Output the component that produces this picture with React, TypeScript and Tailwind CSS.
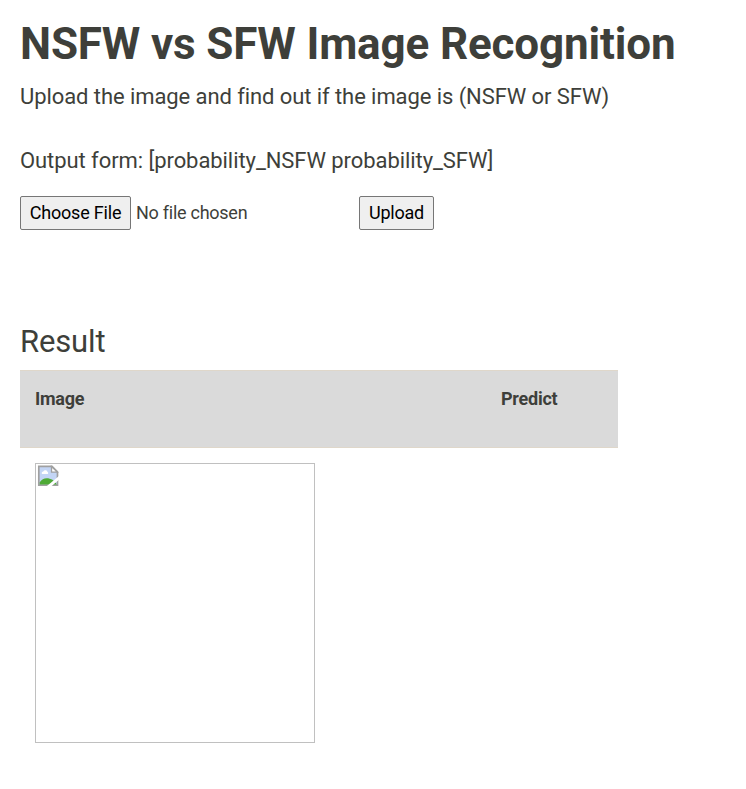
export default function App() {
  return (
    <main className="h-[789px] overflow-hidden bg-white pl-5 pt-[15px] font-[Roboto,sans-serif] text-[#3e3f3a]">
      <h1 className="h-[58px] whitespace-nowrap text-[44px] font-bold leading-[58px] tracking-[-0.15px]">NSFW vs SFW Image Recognition</h1>
      <p className="mt-2 h-8 whitespace-nowrap text-[22px] leading-8 tracking-[-0.08px]">Upload the image and find out if the image is (NSFW or SFW)</p>
      <p className="mt-8 h-8 whitespace-nowrap text-[22px] leading-8 tracking-[-0.07px]">Output form: [probability_NSFW probability_SFW]</p>
      <form className="mt-[19px] flex h-[34px] items-center text-[18px] tracking-[-0.2px]">
        <button type="button" className="h-[34px] w-[111px] whitespace-nowrap rounded-[2px] border border-[#767676] bg-[#efefef] pb-0.5 text-black">Choose File</button>
        <span className="ml-[5px] w-[223px] whitespace-nowrap pb-0.5 tracking-[-0.26px]">No file chosen</span>
        <button type="button" className="h-[34px] w-[75px] rounded-[2px] border border-[#767676] bg-[#efefef] pb-0.5 text-black">Upload</button>
      </form>
      <h2 className="mt-[92px] h-10 text-[31px] leading-10 tracking-[-0.15px]">Result</h2>
      <div className="mt-[8px] flex h-[78px] w-[598px] border-y border-[#dfd7ca] bg-[#dadada] px-[15px] pt-[14px] text-[18px] font-bold leading-7 tracking-[-0.25px]">
        <span className="w-[466px]">Image</span>
        <span>Predict</span>
      </div>
      <div className="ml-[15px] mt-[15px] h-[280px] w-[280px] border border-[#c0c0c0] p-px">
        <svg width="22" height="22" viewBox="0 0 22 22">
          <path fill="#c3d5f5" stroke="#a0a0a0" strokeWidth="1.7" d="M1.8 1.3H15l5.5 5.5v13.4H1.8z" />
          <path fill="#fff" d="M5 9a1.6 1.6 0 0 1 1.3-2.5 2.2 2.2 0 0 1 4.2.6 1.1 1.1 0 0 1 .3 1.9z" />
          <path fill="#4eaa35" d="M2.7 19.4v-2.2c2-2.7 4-3.9 7-3.9 4 0 8 2.1 10 6.1z" />
          <path fill="#fff" d="M9 21.8 22 11v3.8L13.8 21.8z" />
          <path fill="#fff" stroke="#a0a0a0" strokeWidth="1.3" d="M14.5 1.5v5.6h5.8z" />
        </svg>
      </div>
    </main>
  );
}
